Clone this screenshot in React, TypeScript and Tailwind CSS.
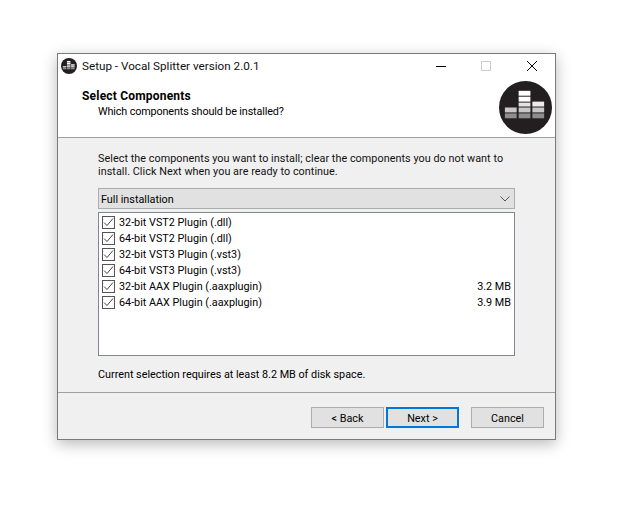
const items = [
  { label: "32-bit VST2 Plugin (.dll)" },
  { label: "64-bit VST2 Plugin (.dll)" },
  { label: "32-bit VST3 Plugin (.vst3)" },
  { label: "64-bit VST3 Plugin (.vst3)" },
  { label: "32-bit AAX Plugin (.aaxplugin)", size: "3.2 MB" },
  { label: "64-bit AAX Plugin (.aaxplugin)", size: "3.9 MB" },
]

const Logo = ({ size }: { size: number }) => (
  <svg width={size} height={size} viewBox="0 0 54 54" className="shrink-0">
    <circle cx="27" cy="27" r="27" fill="#231f20" />
    <rect x="6" y="27" width="12" height="5" fill="#c8c8c8" />
    <rect x="6" y="33" width="12" height="5" fill="#8e8e8e" />
    <rect x="20" y="10" width="12" height="5" fill="#ffffff" />
    <rect x="20" y="16" width="12" height="5" fill="#ffffff" />
    <rect x="20" y="22" width="12" height="4" fill="#e4e4e4" />
    <rect x="20" y="27" width="12" height="5" fill="#c8c8c8" />
    <rect x="20" y="33" width="12" height="5" fill="#8e8e8e" />
    <rect x="34" y="21" width="12" height="5" fill="#ebebeb" />
    <rect x="34" y="27" width="12" height="5" fill="#c8c8c8" />
    <rect x="34" y="33" width="12" height="5" fill="#8e8e8e" />
  </svg>
)

const Check = () => (
  <span className="flex h-[13px] w-[13px] shrink-0 items-center justify-center border border-[#555] bg-white">
    <svg width="11" height="11" viewBox="0 0 11 11" fill="none">
      <path d="M1 5.5 L4 8.5 L10 1.5" stroke="#444" strokeWidth="1" />
    </svg>
  </span>
)

export default function App() {
  return (
    <div className="h-[524px] w-[619px] bg-white pl-[57px] pt-[53px] font-['Roboto',sans-serif] text-[10.8px] leading-[16px] text-black">
      <div className="flex h-[387px] w-[499px] flex-col border border-[#7a7a7a] bg-white shadow-[0_4px_14px_rgba(0,0,0,0.28)]">
        <div className="relative flex h-[84px] shrink-0 flex-col border-b border-[#a0a0a0] bg-white">
          <div className="flex h-[24px] items-center pl-[3px]">
            <Logo size={16} />
            <span className="ml-[5px] text-[11.7px] text-[#111]">Setup - Vocal Splitter version 2.0.1</span>
            <div className="ml-auto flex items-center">
              <svg width="12" height="12" viewBox="0 0 12 12" className="mr-[33px]">
                <path d="M1 6.5H11" stroke="#000" />
              </svg>
              <svg width="12" height="12" viewBox="0 0 12 12" className="mr-[34px]">
                <rect x="1.5" y="1.5" width="9" height="9" fill="none" stroke="#ccc" />
              </svg>
              <svg width="12" height="12" viewBox="0 0 12 12" className="mr-[17px]">
                <path d="M1 1L11 11M11 1L1 11" stroke="#000" />
              </svg>
            </div>
          </div>
          <div className="pl-[24px] pt-[10px]">
            <div className="text-[12px] font-bold tracking-[0.2px]">Select Components</div>
            <div className="pl-[16px] tracking-[-0.13px]">Which components should be installed?</div>
          </div>
          <div className="absolute right-[3px] top-[27px]">
            <Logo size={53} />
          </div>
        </div>
        <div className="flex flex-1 flex-col bg-[#f0f0f0] px-[40px] pt-[14px]">
          <p className="leading-[13px] tracking-[0.05px] text-[#111]">
            Select the components you want to install; clear the components you do not want to install. Click Next when you are ready to continue.
          </p>
          <div className="mt-[10px] flex h-[21px] w-[417px] items-center justify-between border border-[#adadad] bg-[#e1e1e1] pl-[2px] pr-[4px]">
            <span className="pt-[2px]">Full installation</span>
            <svg width="10" height="6" viewBox="0 0 10 6" fill="none">
              <path d="M0.5 0.5L5 5L9.5 0.5" stroke="#555" />
            </svg>
          </div>
          <div className="mt-[3px] flex h-[144px] w-[417px] flex-col border border-[#828790] bg-white px-[3px] pt-[1px]">
            {items.map((item) => (
              <div key={item.label} className="flex h-[16px] items-center gap-[4px]">
                <Check />
                <span className="flex-1 pt-[1px]">{item.label}</span>
                {item.size && <span className="pt-[1px]">{item.size}</span>}
              </div>
            ))}
          </div>
          <p className="mt-[11px]">Current selection requires at least 8.2 MB of disk space.</p>
        </div>
        <div className="flex h-[47px] shrink-0 items-start justify-end border-t border-[#a0a0a0] bg-[#f0f0f0] pr-[11px] pt-[14px]">
          <button className="h-[21px] w-[73px] border border-[#adadad] bg-[#e1e1e1] pt-[2px]">&lt; Back</button>
          <button className="ml-[2px] h-[21px] w-[73px] border-2 border-[#0078d7] bg-[#e1e1e1] pt-[2px]">Next &gt;</button>
          <button className="ml-[12px] h-[21px] w-[73px] border border-[#adadad] bg-[#e1e1e1] pt-[2px]">Cancel</button>
        </div>
      </div>
    </div>
  )
}
